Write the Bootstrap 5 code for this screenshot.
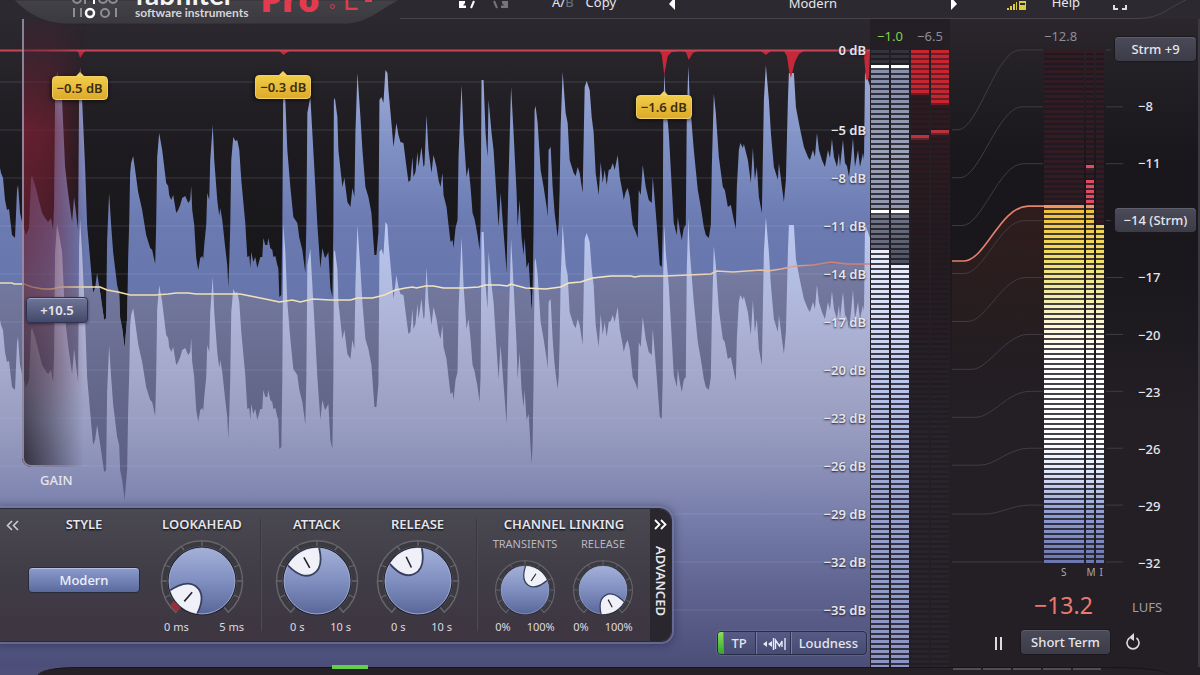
<!DOCTYPE html>
<html lang="en">
<head>
<meta charset="utf-8">
<meta name="viewport" content="width=device-width, initial-scale=1">
<title>Pro-L 2</title>
<link href="https://cdn.jsdelivr.net/npm/bootstrap@5.3.0/dist/css/bootstrap.min.css" rel="stylesheet">
<style>
body{font-family:"Noto Sans","Open Sans",sans-serif;font-size:13px;line-height:16px;color:#e6e5ec;background:#231f25}
button{font:inherit;color:inherit;background:none;border:0;padding:0}
.topbar{height:19px;z-index:5;background:#2d2930}
.topbar-shape{left:0;top:0;width:100%;height:25px}
.brand-block{width:440px;height:25px}
.brand-mark{margin-left:72px}
.brand-words{margin-left:16px;margin-top:-20px}
.brand-name{font:700 28px/28px "Lato","Noto Sans",sans-serif;color:#f4f4f6}
.brand-sub{font:700 12px/10px "Lato","Noto Sans",sans-serif;color:#d5d4d8}
.brand-product{font:800 34px/40px "Open Sans",sans-serif;color:#e23b50;margin:-21px 0 0 12px}
.brand-dot{width:5px;height:5px;border:1px solid #e23b50;border-radius:50%;margin:4px 8px 0 10px}
.brand-l{font:400 30px/40px "Open Sans",sans-serif;color:#e23b50;margin-top:-21px}
.brand-two{width:7px;height:2px;background:#e23b50;margin-left:7px}
.menu{height:16px;margin-top:-6px}
.stage{min-height:0}
.plot{background:linear-gradient(#2c282f,#1d1b1f 130px,#171619 250px,#171619)}
.scale-labels{right:4px;top:0;bottom:0;font-weight:600;text-shadow:0 1px 2px #1b1d30}
.scale-labels>*{flex:48 1 0;min-height:0}
.scale-labels>.lbl-first{flex-grow:62}
.scale-labels>.lbl-gap{flex-grow:25}
.scale-labels>.lbl-end{flex-grow:33}
.peak-tag{height:24px;padding:0 4px;transform:translateX(-50%);background:linear-gradient(#f0cc48,#deaa2a);color:#3c2f12;border-radius:4px;border:1px solid #f2d264;box-shadow:0 1px 4px #000a;font-weight:600;line-height:23px;white-space:nowrap}
.peak-tag::before{content:"";position:absolute;left:50%;top:-5px;margin-left:-5px;border:5px solid transparent;border-top:0;border-bottom-color:#f2d264}
.gain-rail{left:22px;top:0;width:72px;height:448px;overflow:hidden;border-bottom-left-radius:9px}
.gain-red,.gain-shade,.gain-edge{inset:0}
.gain-red{background:linear-gradient(90deg,#7c2033e0,#7c2033b0 40%,#7c203300 90%);-webkit-mask-image:linear-gradient(#0002,#000 110px,#000a 240px,#0005 350px,#0000 400px);mask-image:linear-gradient(#0002,#000 110px,#000a 240px,#0005 350px,#0000 400px)}
.gain-shade{background:linear-gradient(90deg,#2d2633e8,#2d263390 35%,#2d263300 85%);-webkit-mask-image:linear-gradient(#0006,#0002 120px,#0003 260px,#000a 360px,#000 440px);mask-image:linear-gradient(#0006,#0002 120px,#0003 260px,#000a 360px,#000 440px)}
.gain-edge{border:solid #a3a4c0;border-width:0 0 2px 2px;border-bottom-left-radius:9px;-webkit-mask-image:linear-gradient(90deg,#000 10px,#0000);mask-image:linear-gradient(90deg,#000b 10px,#0000)}
.gain-thumb{left:26px;top:278px;width:62px;height:26px;border-radius:4px;font-weight:600;background:linear-gradient(#6e7698,#434969);border:1px solid #2f3350;box-shadow:inset 0 1px 0 #99a0c0,0 1px 3px #0007}
.gain-name{left:40px;top:453px;font-weight:500}
.ghost-range{inset:0;width:100%;height:100%;opacity:0;margin:0}
.adv-panel{left:0;bottom:26px;height:132px;width:671px;border-radius:0 12px 10px 0;background:linear-gradient(#4a4851,#403d47 50%,#3d3540);box-shadow:0 0 0 1px #2c2b3a,0 0 0 3px #7d84a890,0 1px 8px 3px #23234a90}
.panel-head{height:30px;line-height:31px;font-weight:600;font-size:13px;text-shadow:0 1px 2px #000}
.w-arrows{width:24px}.w-style{width:120px}.w-look{width:116px}.w-knob{width:101px}.w-small{width:78px}
.w-link{width:172px}
.sep{width:2px;margin:10px 0;background:linear-gradient(90deg,#2f2d35,#57555e)}
.sub-head{font-size:11px;line-height:10px;margin-bottom:9px;color:#b9b7c0}
.ends{font-size:11px;line-height:18px;color:#dddbe2}
.style-btn{width:112px;height:26px;margin-top:28px;border-radius:4px;color:#eef0ff;font-weight:500;background:linear-gradient(#8b9ccb,#5b6a9d);border:1px solid #2a2b3a;box-shadow:inset 0 1px 0 #b5c0e3}
.adv-tab{width:21px;background:#29262d;border-radius:0 12px 10px 0}
.adv-tab b{writing-mode:vertical-rl;font-weight:600;font-size:13px}
.opts{right:3px;bottom:12px;height:24px;border-radius:4px;overflow:hidden;background:linear-gradient(#555b84,#464b73);border:1px solid #292c48;box-shadow:0 0 0 1px #777da560}
.opts button{border-right:1px solid #2d3050;box-shadow:inset 1px 0 0 #767ca5;font-weight:500}
.led{width:5px;background:linear-gradient(#8be05a,#35a52a)}
.lvl-col{width:40px}
.readout{height:31px;line-height:34px}
.bars{gap:2px;padding:0 1px 0 1px}
.seg{flex:1;position:relative;background-size:100% 100%}
.seg::after{content:"";position:absolute;inset:0;background:repeating-linear-gradient(transparent 0 3px,#1a1822d0 3px 5px)}
.gr-a::after,.gr-b::after{background:repeating-linear-gradient(transparent 0 3px,#1a182290 3px 5px)}
.lv-a{background:linear-gradient(#34323a 0 15px,#fff 15px 20px,#8790ad 20px 40px,#9ba2b8 100px,#8f96ae 160px,#fff 160px 165px,#6f7585 165px,#656b7c 200px,#e9edfd 200px,#d6def8 260px,#b4c0ea 350px,#97a2d0 450px,#8b94c4)}
.lv-b{background:linear-gradient(#34323a 0 15px,#fff 15px 20px,#8790ad 20px 40px,#9ba2b8 100px,#8f96ae 160px,#fff 160px 165px,#6f7585 165px,#4d5262 215px,#e9edfd 215px,#d6def8 260px,#b4c0ea 350px,#97a2d0 450px,#8b94c4)}
.gr-a{background:linear-gradient(#c9252f 0 45px,#2f1a1f 45px 85px,#b9333d 85px 90px,#2f1a1f 90px,#251a1e 200px,#28242a 400px)}
.gr-b{background:linear-gradient(#c9252f 0 55px,#2f1a1f 55px 80px,#b9333d 80px 85px,#2f1a1f 85px,#251a1e 200px,#28242a 400px)}
.side{width:250px;background:linear-gradient(#2a262c,#19171b 140px,#19171b 220px,#231f25 400px,#231f25);border-right:2px solid #3b3841}
.lufs-col{width:60px}
.lufs-col .bars{padding:0}
.lufs-col .seg-s{flex:0 0 40px}
.ls{background:linear-gradient(#341b21 0 155px,#f2955c 155px 160px,#f0bf3e 160px,#f1db58 200px,#f1e99c 240px,#fff8dd 280px,#fff 310px 390px,#e2eafd 420px,#93a0d4 460px,#6b76ae)}
.lm{background:linear-gradient(#341b21 0 115px,#e34a60 115px 120px,#341b21 120px 130px,#e34a60 130px 155px,#f2955c 155px 160px,#f0bf3e 160px,#f1db58 200px,#f1e99c 240px,#fff8dd 280px,#fff 310px 390px,#e2eafd 420px,#93a0d4 460px,#6b76ae)}
.li{background:linear-gradient(#341b21 0 175px,#f1d34c 175px,#f1db58 200px,#f1e99c 240px,#fff8dd 280px,#fff 310px 390px,#e2eafd 420px,#93a0d4 460px,#6b76ae)}
.lufs-scale{width:94px;padding-top:18px;margin-bottom:-12px;font-weight:500}
.lufs-scale>*{height:24px;line-height:24px}
.lufs-scale .val{padding-left:34px}
.chip{border-radius:4px;font-weight:500;background:linear-gradient(#4b4a58,#3c3b48);box-shadow:0 0 0 1px #1b191e,inset 0 1px 0 #5f5e6b}
.chip-w{width:81px;margin-left:11px}
.chip-s{width:89px;height:24px}
.smi{height:18px;font-size:10px;line-height:18px;padding-left:95px;color:#aaa7b0}
.big-row{height:48px;padding-left:84px}
.big-val{font-size:23px;line-height:48px;color:#ea7a70;width:98px}
.unit{color:#a19ea7}
.btn-row{height:26px;margin-bottom:12px;padding-left:43px}
.footbar{height:8px;background:linear-gradient(90deg,#4e5079 869px,#231f25 869px)}
.foot-in{border-radius:40px 60px 0 0/8px 8px 0 0;background:#262127;border-top:1px solid #17141a;margin-left:38px;margin-right:30px}
.foot-led{width:36px;height:4px;left:294px;top:-3px;background:#63cf45}
.foot-seg{right:67px;top:0;width:150px;height:2px;background:repeating-linear-gradient(90deg,#514d55 0 28px,#231f25 28px 30px)}
</style>
</head>
<body>
<div class="d-flex flex-column vh-100 overflow-hidden position-relative">

<header class="topbar position-relative d-flex align-items-start">
  <svg class="topbar-shape position-absolute" viewBox="0 0 1200 25" preserveAspectRatio="none" aria-hidden="true">
    <defs><linearGradient id="tb" x1="0" y1="0" x2="0" y2="1"><stop offset="0" stop-color="#434247"/><stop offset="1" stop-color="#3b393f"/></linearGradient></defs>
    <path d="M400 18.500H1140C1162 18 1172 5 1186 0" fill="none" stroke="#45424a"/>
    <path d="M14 0C26 12 42 24 68 24H345C368 24 382 8 400 0Z" fill="url(#tb)" stroke="#26232a" stroke-width=".6"/>
  </svg>
  <div class="brand-block position-relative d-flex align-items-start overflow-hidden flex-shrink-0">
    <svg class="brand-mark" width="47" height="19" fill="none" stroke="#8e8d92" stroke-width="2" aria-hidden="true">
      <circle cx="5" cy="-1" r="4"/><path d="M13 0V4"/><path d="M22 0V4" stroke="#fff"/><circle cx="31" cy="-1" r="4"/><circle cx="41" cy="-1" r="4"/>
      <path d="M2 8V17M9 8V17M44 8V17"/><circle cx="18" cy="13" r="4" stroke="#fff" stroke-width="2.500"/><circle cx="33" cy="13" r="4"/>
    </svg>
    <div class="brand-words"><div class="brand-name">fabfilter</div><div class="brand-sub">software instruments</div></div>
    <div class="brand-product">Pro</div><span class="brand-dot"></span><div class="brand-l">L</div><span class="brand-two"></span>
  </div>
  <nav class="menu position-relative d-flex align-items-start flex-fill" aria-label="Main">
    <button aria-label="Undo" class="ms-3"><svg width="20" height="14"><path d="M3 4V11H10V8.500H7L9 6V4Z" fill="#fff"/><path d="M15 11L18 4" stroke="#fff" stroke-width="2"/></svg></button>
    <button aria-label="Redo" class="ms-3"><svg width="20" height="14"><path d="M16 4V11H9V8.500H12L10 6V4Z" fill="#77747b"/><path d="M5 11L2 4" stroke="#77747b" stroke-width="2"/></svg></button>
    <button class="ms-4 ps-3">A/<span class="text-secondary">B</span></button>
    <button class="ms-2 ps-1">Copy</button>
    <div class="d-flex justify-content-between flex-fill ms-5 ps-1">
      <button aria-label="Previous preset"><svg width="8" height="16"><path d="M7 1V14L1 8Z" fill="#fff"/></svg></button>
      <button>Modern</button>
      <button aria-label="Next preset"><svg width="8" height="16"><path d="M1 1V14L7 8Z" fill="#fff"/></svg></button>
    </div>
    <button class="ms-5" aria-label="Metering"><svg width="22" height="14" fill="#dccb3c"><path d="M1 11h2v2H1zM4 9h2v4H4zM7 7h2v6H7zM10 5h1v8h-1zM13 4h7v9h-7z"/><path d="M14 6h5v2h-5z" fill="#2d2930"/></svg></button>
    <button class="ms-4">Help</button>
    <button class="ms-4 ps-2" aria-label="Full screen"><svg width="16" height="16" fill="none" stroke="#ddd" stroke-width="2"><path d="M2 9V13H6M10 13H14V9"/></svg></button>
    <span class="ms-5 ps-4"></span>
  </nav>
</header>

<main class="stage d-flex flex-fill">
  <section class="plot position-relative flex-fill overflow-hidden" aria-label="Level history">
    <svg class="position-absolute w-100 h-100" viewBox="0 19 869 648" preserveAspectRatio="none" aria-hidden="true">
      <defs>
        <linearGradient id="up" gradientUnits="userSpaceOnUse" x1="0" y1="60" x2="0" y2="330"><stop offset="0" stop-color="#a3b0dc"/><stop offset=".3" stop-color="#8192c6"/><stop offset=".6" stop-color="#6b7bb2"/><stop offset="1" stop-color="#6473a8"/></linearGradient>
        <linearGradient id="mid" gradientUnits="userSpaceOnUse" x1="0" y1="260" x2="0" y2="500"><stop offset="0" stop-color="#777ca3"/><stop offset=".5" stop-color="#65698c"/><stop offset="1" stop-color="#5a5c84"/></linearGradient>
        <linearGradient id="low" gradientUnits="userSpaceOnUse" x1="0" y1="210" x2="0" y2="667"><stop offset="0" stop-color="#bccbf6"/><stop offset=".2" stop-color="#b0b8dc"/><stop offset=".36" stop-color="#a4a8ca"/><stop offset=".48" stop-color="#979cc0"/><stop offset=".58" stop-color="#878db5"/><stop offset=".7" stop-color="#7279a6"/><stop offset=".82" stop-color="#616591"/><stop offset="1" stop-color="#4b4e78"/></linearGradient>
        <linearGradient id="loud" gradientUnits="userSpaceOnUse" x1="0" y1="0" x2="869" y2="0"><stop offset="0" stop-color="#efdca6"/><stop offset=".7" stop-color="#f3e8c4"/><stop offset=".88" stop-color="#e5c3a5"/><stop offset=".94" stop-color="#d4806f"/></linearGradient>
        <path id="wave" d="M0 168L1 173 3 178 5 200 7 210 9 209 12 235 15 238 17 190 18 185 20 213 22 222 26 235 29 228 31 178 32 176 35 185 38 197 42 213 45 218 48 222 51 218 53 230 54 205 55 100 57 72 60 88 62 100 65 167 68 193 72 222 74 197 77 222 78 230 79 93 80 67 82 100 85 167 87 225 92 282 93 293 95 288 97 273 100 292 104 320 106 318 107 240 109 193 111 225 113 252 117 285 119 293 120 318 122 328 124.500 348 127 318 128 258 129 225 130 173 131 163 133 156 135 170 138 192 142 210 146 235 150 248 152 250 155 264 156 225 157 157 159 133 162 150 166 183 168 186 169 195 171 200 173 195 176 213 178 210 180 205 182 198 185 196 188 203 190 200 191 186 192 210 194 225 196 258 198 270 200 258 202 256 203 259 204 245 206 225 207 193 209 200 210 160 212.500 125 214 160 217 200 219 216 220 208 222 220 225 248 227 265 228 287 229 262 230 225 231 160 233 137 235 141 237 140 239 150 241 180 245 223 247 257 249 256 250 268 251 252 253 262 255 257 257 268 260 257 262 257 263 238 265 245 267 245 268 238 270 248 272 250 273 257 275 256 277 265 278 268 279 297 281 295 282 225 283 72 285 100 287 150 290 187 293 217 297 223 299 238 302 250 305 273 306 225 307 113 310 97 312 133 315 187 317 225 320 268 322 248 324 256 325 258 328 252 330 288 332 297 333 225 333.500 100 334.500 98 337 117 338 150 342 187 344 178 347 202 350 207 352 188 354 197 355 133 357 73 360 117 362 150 365 187 368 197 371 213 374 255 376 255 378 232 379 100 381 97 383 103 385 70 387 73 388 90 391 123 393 147 396 123 398 135 400 142 403 143 406 167 408 182 410 180 412 157 413 177 415 172 417 152 418 167 421 147 423 167 424 165 426 115 428 150 431 173 433 155 436 167 438 180 440 187 442 173 443 195 446 207 448 225 450 242 452 240 453 248 455 228 457 220 458 157 461 85 463 133 466 177 468 167 470 187 472 213 474 219 477 235 479 250 480 225 481 80 483 80 485 133 487 157 488 100 491 133 493 150 496 197 498 227 500 193 502 220 504 245 506 272 507 220 508 177 510.500 87 513 133 516 193 517 227 519 200 521 238 523 255 524 238 526 268 528 262 529 278 531 312 532 292 533 225 534 110 535 106 537 123 540 170 543 187 546 207 547 217 548 150 550 147 552 187 554 213 557 237 558 225 559 190 560 127 562 72 565 113 567 123 569 160 573 173 575 176 577 167 579 173 582 193 584 87 586 81 589 90 591 117 593 133 595 173 598 195 600 162 602 183 604 170 606 185 608 170 610 169 612 163 614 170 617 155 619 177 622 193 623 200 625 192 627 188 629 197 632 225 635 232 637 238 638 190 640 195 642 165 645 187 648 200 651 203 652 177 654 200 656 225 659 265 661 267 662 225 662.500 120 663.500 73 665 100 668 133 671 187 673 223 676 235 677 217 679 230 681 240 683 228 685 225 686 117 687.500 66 689 100 693 150 697 190 700 207 703 227 705 235 708 238 710 225 711 167 713 94 715 113 718 157 722 187 724 190 727 207 730 205 733 220 735 229 736 187 738 150 739.500 143 742 148 743 144 747 160 750 183 752 148 754 180 756 167 758 197 761 213 763 100 765 65 768 100 770 133 773 167 777 180 778 163 781 187 783 202 785 180 787 100 788 73 793 73 795 107 798 123 800 133 803 147 807 157 809 160 812 150 814 157 816 133 818 150 821 160 824 167 827 150 829 158 831 139 833 157 836 167 838 153 839 167 842 140 844 163 846 166 848 177 850 160 852 138 854 167 857 150 859 167 862 153 863 160 864 72 867 80 869 86V667H0Z"/>
        <clipPath id="in"><use href="#wave"/></clipPath>
        <clipPath id="in2"><use href="#wave" transform="translate(0 152)"/></clipPath>
        <path id="ln" d="M0 283L12 283 14 284H24L32 287 43 289 52 289 60 287H100L107 290 118 292 130 295H155L168 294 176 293H188L196 294H240L255 297 265 299 279 302 292 300 300 302 312 299 330 300 350 300 357 298 372 298 384 295 395 290 405 288 412 287 416 288 425 286H433L443 288H462L478 287 485 285 498 285 507 286 510 284 525 288 545 289 560 287 568 283 580 282 592 278 610 276H630L634 277 640 276H665L710 274 716 271 732 272 760 270 767 271 780 269 795 266 812 265 830 262 846 264H869"/>
      </defs>
      <use href="#wave" fill="url(#up)"/>
      <g clip-path="url(#in)">
        <path d="M0 284L43 289 60 287H100L130 295 240 294 279 301 350 300 405 288 545 289 592 278 710 274 780 269 812 265 869 264V667H0Z" fill="url(#mid)"/>
      </g>
      <path d="M0 200H869V667H0Z" fill="url(#low)" clip-path="url(#in2)"/>
      <path d="M0 82H869M0 130H869M0 178H869M0 226H869M0 274H869M0 322H869M0 370H869M0 418H869M0 466H869M0 514H869M0 562H869M0 610H869" stroke="#c3cdf0" stroke-opacity=".18"/>
      <path d="M0 50H74L78 52 80 58 84 52 88 50H278L283 55 289 51H659L661 55 663.500 75 667 56 671 52 680 51 685 52 688 60 692 53 697 51H760L765 55 770 51H783L786 56 788 70 790 78 794 62 798 54 803 51H861L863 55 865 80 868 78 869 50Z" fill="#c5283b"/>
      <path d="M0 50.500H869" stroke="#c94555" stroke-width="2"/>
      <use href="#ln" fill="none" stroke="url(#loud)" stroke-width="1.600"/>
    </svg>

    <div class="gain-rail position-absolute">
      <div class="gain-red position-absolute"></div><div class="gain-shade position-absolute"></div><div class="gain-edge position-absolute"></div>
      <input id="gain" class="ghost-range position-absolute" type="range" min="0" max="30" step=".1" value="10.5">
    </div>
    <button class="gain-thumb position-absolute">+10.5</button>
    <label class="gain-name position-absolute" for="gain">GAIN</label>

    <div class="peak-tag position-absolute" style="left:9.15%;top:57px">−0.5 dB</div>
    <div class="peak-tag position-absolute" style="left:32.55%;top:56px">−0.3 dB</div>
    <div class="peak-tag position-absolute" style="left:76.3%;top:76px">−1.6 dB</div>

    <div class="scale-labels position-absolute d-flex flex-column text-end">
      <div class="lbl-first d-flex align-items-center justify-content-end">0 dB</div><div class="lbl-gap"></div>
      <div class="d-flex align-items-center justify-content-end">−5 dB</div>
      <div class="d-flex align-items-center justify-content-end">−8 dB</div>
      <div class="d-flex align-items-center justify-content-end">−11 dB</div>
      <div class="d-flex align-items-center justify-content-end">−14 dB</div>
      <div class="d-flex align-items-center justify-content-end">−17 dB</div>
      <div class="d-flex align-items-center justify-content-end">−20 dB</div>
      <div class="d-flex align-items-center justify-content-end">−23 dB</div>
      <div class="d-flex align-items-center justify-content-end">−26 dB</div>
      <div class="d-flex align-items-center justify-content-end">−29 dB</div>
      <div class="d-flex align-items-center justify-content-end">−32 dB</div>
      <div class="d-flex align-items-center justify-content-end">−35 dB</div>
      <div class="lbl-end"></div>
    </div>

    <svg width="0" height="0" class="position-absolute" aria-hidden="true">
      <defs>
        <linearGradient id="kb" x1="0" y1="0" x2="0" y2="1"><stop offset="0" stop-color="#a3b0d8"/><stop offset=".5" stop-color="#7f8fc0"/><stop offset="1" stop-color="#5a6699"/></linearGradient>
        <clipPath id="kc"><circle r="33"/></clipPath>
        <g id="ring" fill="none">
          <path d="M-26.200 31.200A40.500 40.500 0 1 1 26.200 31.200L22 26A34 34 0 1 0 -22 26Z" fill="#3c3a41" stroke="#67656c" stroke-width="1.500"/>
          <g stroke="#67656c" stroke-width="1.300"><path d="M0-41V-35M-41 0H-35M41 0H35M-38-16L-32-14M38-16L32-14M-38 17L-32 14M38 17L32 14M-21-35L-18-31M21-35L18-31"/></g>
          <circle r="34.500" fill="#1f2030"/><circle r="33" fill="url(#kb)" stroke="#b4bfe2" stroke-width=".8"/>
        </g>
        <g id="petal"><g clip-path="url(#kc)"><path d="M-20-38C-17-19-11-8 0-8S17-19 20-38Z" fill="#f0f0f8" stroke="#39405f" stroke-width="1.800"/></g><path d="M0-27V-15" stroke="#23232b" stroke-width="1.600"/></g>
      </defs>
    </svg>

    <section class="adv-panel position-absolute d-flex text-center" aria-label="Advanced">
      <div class="w-arrows"><button class="panel-head" aria-label="Collapse left"><svg width="13" height="11" fill="none" stroke="#ccc" stroke-width="1.600"><path d="M6 1L1.500 5.500 6 10M12 1L7.500 5.500 12 10"/></svg></button></div>
      <div class="w-style"><div class="panel-head">STYLE</div><button class="style-btn">Modern</button></div>
      <div class="w-look">
        <label class="panel-head d-block" for="k1">LOOKAHEAD</label>
        <div class="position-relative"><svg class="d-block mx-auto" width="84" height="79" viewBox="-42 -42 84 79"><use href="#ring"/><path d="M-26 31A40 40 0 0 1-32 24L-28 20-21 27Z" fill="#93303c"/><use href="#petal" transform="rotate(-139)"/></svg><input id="k1" type="range" class="ghost-range position-absolute"></div>
        <div class="ends d-flex justify-content-between px-3"><span class="ps-1">0 ms</span><span>5 ms</span></div>
      </div>
      <div class="sep"></div>
      <div class="w-knob ms-1">
        <label class="panel-head d-block" for="k2">ATTACK</label>
        <div class="position-relative"><svg class="d-block mx-auto" width="84" height="79" viewBox="-42 -42 84 79"><use href="#ring"/><use href="#petal" transform="rotate(-29)"/></svg><input id="k2" type="range" class="ghost-range position-absolute"></div>
        <div class="ends d-flex justify-content-between ps-4 pe-3"><span>0 s</span><span>10 s</span></div>
      </div>
      <div class="w-knob">
        <label class="panel-head d-block" for="k3">RELEASE</label>
        <div class="position-relative"><svg class="d-block mx-auto" width="84" height="79" viewBox="-42 -42 84 79"><use href="#ring"/><use href="#petal" transform="rotate(-26)"/></svg><input id="k3" type="range" class="ghost-range position-absolute"></div>
        <div class="ends d-flex justify-content-between ps-4 pe-3"><span>0 s</span><span>10 s</span></div>
      </div>
      <div class="sep ms-2"></div>
      <div class="w-link flex-fill">
        <div class="panel-head">CHANNEL LINKING</div>
        <div class="d-flex justify-content-center">
          <div class="w-small">
            <label class="sub-head d-block" for="k4">TRANSIENTS</label>
            <div class="position-relative"><svg class="d-block mx-auto" width="64" height="60" viewBox="-44 -44 88 82.500"><use href="#ring"/><use href="#petal" transform="rotate(34)"/></svg><input id="k4" type="range" class="ghost-range position-absolute"></div>
            <div class="ends d-flex justify-content-center gap-3"><span>0%</span><span>100%</span></div>
          </div>
          <div class="w-small">
            <label class="sub-head d-block" for="k5">RELEASE</label>
            <div class="position-relative"><svg class="d-block mx-auto" width="64" height="60" viewBox="-44 -44 88 82.500"><use href="#ring"/><use href="#petal" transform="rotate(152)"/></svg><input id="k5" type="range" class="ghost-range position-absolute"></div>
            <div class="ends d-flex justify-content-center gap-3"><span>0%</span><span>100%</span></div>
          </div>
        </div>
      </div>
      <button class="adv-tab d-flex flex-column align-items-center flex-shrink-0">
        <svg class="mt-2 mb-3" width="13" height="13" fill="none" stroke="#fff" stroke-width="1.800"><path d="M1 3L5.500 7.500 1 12M7 3L11.500 7.500 7 12"/></svg><b>ADVANCED</b>
      </button>
    </section>

    <div class="opts position-absolute d-flex">
      <span class="led"></span>
      <button class="px-2">TP</button>
      <button class="px-1" aria-label="Side chain"><svg width="26" height="16" fill="none" stroke="#e8e9f5" stroke-width="1.400"><path d="M7 5L3 8 7 11ZM12 5L8 8 12 11Z" fill="#e8e9f5" stroke="none"/><path d="M13.500 2V14M15.500 13V4L19.500 10 22 5V11M25 2V14"/></svg></button>
      <button class="px-2 border-end-0">Loudness</button>
    </div>
  </section>

  <section class="d-flex flex-shrink-0" aria-label="Level meters">
    <div class="lvl-col d-flex flex-column text-center"><div class="readout"><span style="color:#7fd24c">−1.0</span></div><div class="bars d-flex flex-fill"><div class="seg lv-a"></div><div class="seg lv-b"></div></div></div>
    <div class="lvl-col d-flex flex-column text-center"><div class="readout"><span style="color:#8f8d94">−6.5</span></div><div class="bars d-flex flex-fill"><div class="seg gr-a"></div><div class="seg gr-b"></div></div></div>
  </section>

  <aside class="side d-flex flex-column flex-shrink-0 position-relative" aria-label="Loudness">
    <div class="d-flex flex-fill position-relative">
      <svg class="position-absolute w-100 h-100" viewBox="0 19 248 545" preserveAspectRatio="none" fill="none" aria-hidden="true">
        <defs><linearGradient id="glow" x1="0" y1="0" x2="0" y2="1"><stop offset="0" stop-color="#3a1e1f" stop-opacity=".7"/><stop offset=".4" stop-color="#30201f" stop-opacity=".6"/><stop offset="1" stop-color="#231f25" stop-opacity="0"/></linearGradient></defs>
        <path d="M2 262H14C36 260 50 207 78 207H95V440H2Z" fill="url(#glow)"/>
        <g stroke="#403c42">
          <path d="M2 130H8C28 130 46 50 70 50H93M156 50H161"/>
          <path d="M2 178H10C30 178 48 107 72 107H93M156 107H173"/>
          <path d="M2 226H12C32 226 49 164 73 164H93M156 164H173"/>
          <path d="M2 274H14C34 274 50 221 74 221H93M156 221H161"/>
          <path d="M2 322H18C36 322 52 278 76 278H93M156 278H173"/>
          <path d="M2 370H22C38 370 56 335 78 335H93M156 335H173"/>
          <path d="M2 418H26C42 418 58 392 80 392H93M156 392H173"/>
          <path d="M2 466H30C46 466 58 449 80 449H93M156 449H173"/>
          <path d="M2 515H34C50 515 62 506 80 506H93M156 506H173"/>
          <path d="M2 563H93M156 563H173"/>
        </g>
        <path d="M2 261.500H14C36 260 50 207 78 206.500H94" stroke="#e2836c" stroke-width="1.600"/>
      </svg>
      <div class="flex-fill"></div>
      <div class="lufs-col d-flex flex-column position-relative"><div class="readout text-nowrap" style="color:#8f8d94">−12.8</div><div class="d-flex flex-fill bars"><div class="seg seg-s ls"></div><div class="seg lm"></div><div class="seg li"></div></div></div>
      <div class="lufs-scale d-flex flex-column justify-content-between position-relative">
        <button class="chip chip-w">Strm +9</button><div class="val">−8</div><div class="val">−11</div><button class="chip chip-w text-nowrap">−14 (Strm)</button><div class="val">−17</div><div class="val">−20</div><div class="val">−23</div><div class="val">−26</div><div class="val">−29</div><div class="val">−32</div>
      </div>
    </div>
    <div class="smi d-flex"><span class="ps-3 pe-3 me-1">S</span><span class="me-1">M</span><span>I</span></div>
    <div class="big-row d-flex align-items-center"><span class="big-val">−13.2</span><span class="unit pt-1">LUFS</span></div>
    <div class="btn-row d-flex align-items-center gap-3">
      <button aria-label="Pause"><svg width="12" height="14" fill="#dcdbe0"><path d="M2 1h2v13H2zM7 1h2v13H7z"/></svg></button>
      <button class="chip chip-s text-nowrap">Short Term</button>
      <button aria-label="Reset"><svg width="14" height="18" fill="none" stroke="#dcdbe0" stroke-width="1.600"><path d="M10.500 5A6 6 0 1 1 3.500 5"/><path d="M8 0V8L3 4.500Z" fill="#dcdbe0" stroke="none"/></svg></button>
    </div>
  </aside>
</main>

<footer class="footbar d-flex flex-shrink-0"><div class="foot-in flex-fill position-relative"><span class="foot-led position-absolute"></span><span class="foot-seg position-absolute"></span></div></footer>
</div>
<script src="https://cdn.jsdelivr.net/npm/bootstrap@5.3.0/dist/js/bootstrap.bundle.min.js"></script>
</body>
</html>
